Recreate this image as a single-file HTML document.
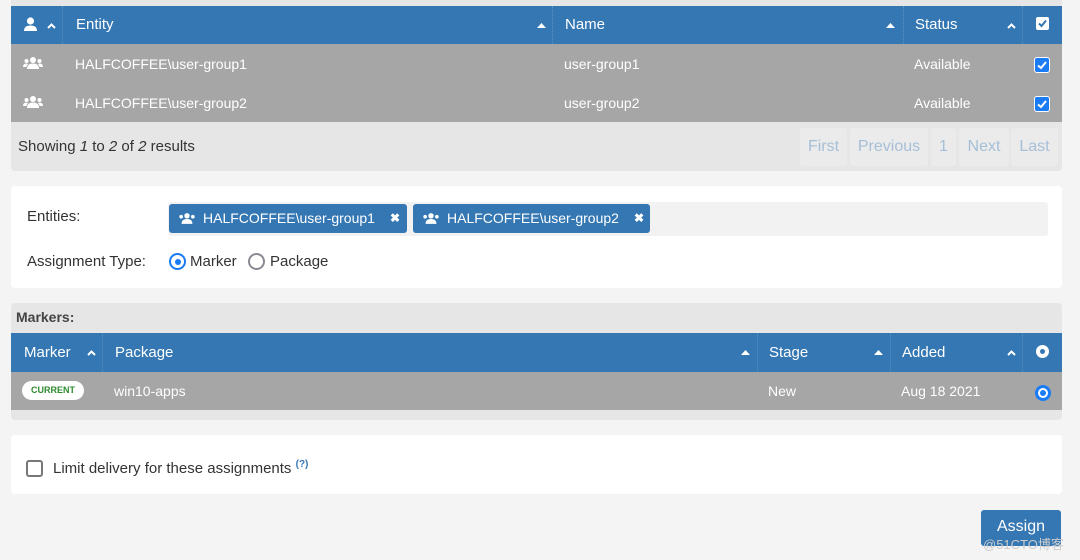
<!DOCTYPE html>
<html><head><meta charset="utf-8"><style>
*{box-sizing:border-box;margin:0;padding:0}
body{width:1080px;height:560px;background:#f4f4f4;font-family:"Liberation Sans",sans-serif;font-size:14px;color:#333;position:relative;overflow:hidden}
.abs{position:absolute}
.hdr{background:#3477b3;color:#fff;font-size:15px}
.row{background:#a6a6a6;color:#fff;font-size:14px}
.t{position:absolute;white-space:nowrap}
.sep{position:absolute;top:0;bottom:0;border-left:1px dotted #5b8fc0}
.cb{position:absolute;width:16px;height:16px;background:#1a7cf5;border-radius:3px;border:1px solid #fff}
.pg{position:absolute;top:128px;height:38px;background:#ebebeb;border-radius:3px;color:#a5bfd8;font-size:16px;line-height:38px;text-align:center}
.tag{position:absolute;top:204px;height:29px;background:#3477b3;border-radius:3px;color:#fff;font-size:14px;line-height:29px}
.chev{position:absolute}
</style></head><body>
<div class="abs" style="left:24px;top:-4px;width:121px;height:6px;border:1px solid #999;border-radius:3px;background:#ddd"></div>
<div class="abs" style="left:880px;top:-4px;width:120px;height:6px;border:1px solid #999;border-radius:3px;background:#ddd"></div>
<div class="abs" style="left:11px;top:0;width:1051px;height:171px;background:#e6e6e6;border-radius:0 0 4px 4px"></div>
<div class="abs hdr" style="left:11px;top:6px;width:1051px;height:38px">
 <svg class="abs" style="left:13px;top:11px" width="13" height="14" viewBox="0 0 13 14"><circle cx="6.5" cy="4" r="3.6" fill="#fff"/><path d="M0 14 Q0 8.5 6.5 8.5 Q13 8.5 13 14Z" fill="#fff"/></svg>
 <svg class="chev" style="left:36px;top:17px" width="9" height="6" viewBox="0 0 9 6"><path d="M1 5 L4.5 1.5 L8 5" stroke="#fff" stroke-width="2" fill="none"/></svg>
 <div class="sep" style="left:51px"></div>
 <span class="t" style="left:65px;top:10px">Entity</span>
 <svg class="chev" style="left:526px;top:17px" width="9" height="5" viewBox="0 0 9 5"><path d="M0 5 L4.5 0 L9 5Z" fill="#fff"/></svg>
 <div class="sep" style="left:541px"></div>
 <span class="t" style="left:554px;top:10px">Name</span>
 <svg class="chev" style="left:875px;top:17px" width="9" height="5" viewBox="0 0 9 5"><path d="M0 5 L4.5 0 L9 5Z" fill="#fff"/></svg>
 <div class="sep" style="left:892px"></div>
 <span class="t" style="left:904px;top:10px">Status</span>
 <svg class="chev" style="left:996px;top:17px" width="9" height="6" viewBox="0 0 9 6"><path d="M1 5 L4.5 1.5 L8 5" stroke="#fff" stroke-width="2" fill="none"/></svg>
 <div class="sep" style="left:1011px"></div>
 <div class="abs" style="left:1025px;top:11px;width:13px;height:13px;background:#fff;border-radius:2px"><svg width="13" height="13" viewBox="0 0 13 13"><path d="M3 6.5 L5.5 9 L10 3.5" stroke="#3477b3" stroke-width="2" fill="none"/></svg></div>
</div>
<div class="abs row" style="left:11px;top:44px;width:1051px;height:78px">
 <svg class="abs" style="left:12px;top:13px" width="20" height="12" viewBox="0 0 20 12"><circle cx="10" cy="3" r="3" fill="#fff"/><circle cx="3.5" cy="4" r="2" fill="#fff"/><circle cx="16.5" cy="4" r="2" fill="#fff"/><path d="M4 12 Q4 6.5 10 6.5 Q16 6.5 16 12Z" fill="#fff"/><path d="M0 10 Q0 6.5 3.5 6.5 L5 7 Q3.5 8.5 3.5 10Z M20 10 Q20 6.5 16.5 6.5 L15 7 Q16.5 8.5 16.5 10Z" fill="#fff"/></svg>
 <span class="t" style="left:64px;top:12px">HALFCOFFEE\user-group1</span>
 <span class="t" style="left:553px;top:12px">user-group1</span>
 <span class="t" style="left:903px;top:12px">Available</span>
 <div class="cb" style="left:1023px;top:13px"><svg width="14" height="14" viewBox="0 0 14 14"><path d="M3 7.5 L6 10 L11 4" stroke="#fff" stroke-width="2" fill="none"/></svg></div>
 <svg class="abs" style="left:12px;top:52px" width="20" height="12" viewBox="0 0 20 12"><circle cx="10" cy="3" r="3" fill="#fff"/><circle cx="3.5" cy="4" r="2" fill="#fff"/><circle cx="16.5" cy="4" r="2" fill="#fff"/><path d="M4 12 Q4 6.5 10 6.5 Q16 6.5 16 12Z" fill="#fff"/><path d="M0 10 Q0 6.5 3.5 6.5 L5 7 Q3.5 8.5 3.5 10Z M20 10 Q20 6.5 16.5 6.5 L15 7 Q16.5 8.5 16.5 10Z" fill="#fff"/></svg>
 <span class="t" style="left:64px;top:51px">HALFCOFFEE\user-group2</span>
 <span class="t" style="left:553px;top:51px">user-group2</span>
 <span class="t" style="left:903px;top:51px">Available</span>
 <div class="cb" style="left:1023px;top:52px"><svg width="14" height="14" viewBox="0 0 14 14"><path d="M3 7.5 L6 10 L11 4" stroke="#fff" stroke-width="2" fill="none"/></svg></div>
</div>
<span class="t" style="left:18px;top:138px;font-size:15px">Showing <i>1</i> to <i>2</i> of <i>2</i> results</span>
<div class="pg" style="left:800px;width:47px">First</div>
<div class="pg" style="left:850px;width:78px">Previous</div>
<div class="pg" style="left:931px;width:25px">1</div>
<div class="pg" style="left:959px;width:50px">Next</div>
<div class="pg" style="left:1011px;width:47px">Last</div>

<div class="abs" style="left:11px;top:186px;width:1051px;height:102px;background:#fff;border-radius:4px"></div>
<span class="t" style="left:27px;top:208px;font-size:15px">Entities:</span>
<div class="abs" style="left:168px;top:202px;width:880px;height:34px;background:#f2f2f2;border-radius:3px"></div>
<div class="tag" style="left:169px;width:238px"><svg class="abs" style="left:9px;top:9px" width="18" height="11" viewBox="0 0 20 12"><circle cx="10" cy="3" r="3" fill="#fff"/><circle cx="3.5" cy="4" r="2" fill="#fff"/><circle cx="16.5" cy="4" r="2" fill="#fff"/><path d="M4 12 Q4 6.5 10 6.5 Q16 6.5 16 12Z" fill="#fff"/></svg><span class="t" style="left:34px">HALFCOFFEE\user-group1</span><span class="t" style="left:221px;font-size:12px;font-weight:bold">✖</span></div>
<div class="tag" style="left:413px;width:237px"><svg class="abs" style="left:9px;top:9px" width="18" height="11" viewBox="0 0 20 12"><circle cx="10" cy="3" r="3" fill="#fff"/><circle cx="3.5" cy="4" r="2" fill="#fff"/><circle cx="16.5" cy="4" r="2" fill="#fff"/><path d="M4 12 Q4 6.5 10 6.5 Q16 6.5 16 12Z" fill="#fff"/></svg><span class="t" style="left:34px">HALFCOFFEE\user-group2</span><span class="t" style="left:221px;font-size:12px;font-weight:bold">✖</span></div>
<span class="t" style="left:27px;top:253px;font-size:15px">Assignment Type:</span>
<div class="abs" style="left:169px;top:253px;width:17px;height:17px;border-radius:50%;border:2px solid #1a7cf5;background:#fff"><div class="abs" style="left:3.5px;top:3.5px;width:6px;height:6px;border-radius:50%;background:#1a7cf5"></div></div>
<span class="t" style="left:190px;top:253px;font-size:15px">Marker</span>
<div class="abs" style="left:248px;top:253px;width:17px;height:17px;border-radius:50%;border:2px solid #8a8a95;background:#fff"></div>
<span class="t" style="left:270px;top:253px;font-size:15px">Package</span>

<div class="abs" style="left:11px;top:303px;width:1051px;height:117px;background:#e6e6e6;border-radius:4px"></div>
<span class="t" style="left:16px;top:309px;font-weight:bold;font-size:14px;color:#444">Markers:</span>
<div class="abs hdr" style="left:11px;top:333px;width:1051px;height:39px">
 <span class="t" style="left:13px;top:11px">Marker</span>
 <svg class="chev" style="left:76px;top:17px" width="9" height="6" viewBox="0 0 9 6"><path d="M1 5 L4.5 1.5 L8 5" stroke="#fff" stroke-width="2" fill="none"/></svg>
 <div class="sep" style="left:91px"></div>
 <span class="t" style="left:104px;top:11px">Package</span>
 <svg class="chev" style="left:730px;top:17px" width="9" height="5" viewBox="0 0 9 5"><path d="M0 5 L4.5 0 L9 5Z" fill="#fff"/></svg>
 <div class="sep" style="left:746px"></div>
 <span class="t" style="left:758px;top:11px">Stage</span>
 <svg class="chev" style="left:863px;top:17px" width="9" height="5" viewBox="0 0 9 5"><path d="M0 5 L4.5 0 L9 5Z" fill="#fff"/></svg>
 <div class="sep" style="left:879px"></div>
 <span class="t" style="left:891px;top:11px">Added</span>
 <svg class="chev" style="left:996px;top:17px" width="9" height="6" viewBox="0 0 9 6"><path d="M1 5 L4.5 1.5 L8 5" stroke="#fff" stroke-width="2" fill="none"/></svg>
 <div class="sep" style="left:1011px"></div>
 <div class="abs" style="left:1025px;top:12px;width:13px;height:13px;border-radius:50%;background:#fff"><div class="abs" style="left:4px;top:4px;width:5px;height:5px;border-radius:50%;background:#3477b3"></div></div>
</div>
<div class="abs row" style="left:11px;top:372px;width:1051px;height:38px">
 <div class="abs" style="left:11px;top:9px;width:62px;height:19px;background:#fff;border-radius:10px;color:#2e8b2e;font-size:9px;font-weight:bold;text-align:center;line-height:19px">CURRENT</div>
 <span class="t" style="left:103px;top:11px">win10-apps</span>
 <span class="t" style="left:757px;top:11px">New</span>
 <span class="t" style="left:890px;top:11px">Aug 18 2021</span>
 <div class="abs" style="left:1024px;top:13px;width:16px;height:16px;border-radius:50%;background:#1a7cf5"><div class="abs" style="left:3px;top:3px;width:10px;height:10px;border-radius:50%;background:#fff"></div><div class="abs" style="left:5px;top:5px;width:6px;height:6px;border-radius:50%;background:#1a7cf5"></div></div>
</div>

<div class="abs" style="left:11px;top:435px;width:1051px;height:59px;background:#fff;border-radius:4px"></div>
<div class="abs" style="left:26px;top:460px;width:17px;height:17px;border:2px solid #777;border-radius:3px;background:#fff"></div>
<span class="t" style="left:53px;top:459px;font-size:15px">Limit delivery for these assignments <sup style="color:#3477b3;font-size:10px;font-weight:bold">(?)</sup></span>

<div class="abs" style="left:981px;top:510px;width:80px;height:36px;background:#3477b3;border-radius:3px;color:#fff;font-size:16px;text-align:center;line-height:34px">Assign</div>
<span class="t" style="left:983px;top:534px;font-size:13px;color:#ccc;font-family:'Liberation Sans','Noto Sans CJK SC',sans-serif">@51CTO博客</span>
</body></html>
